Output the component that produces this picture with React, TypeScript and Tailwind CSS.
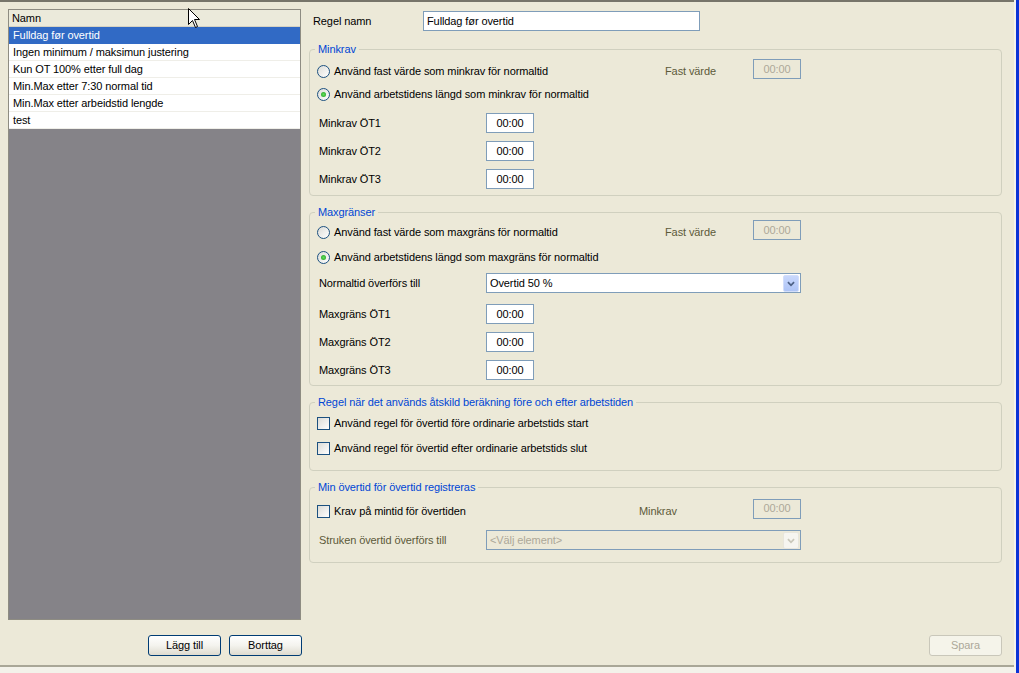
const rules = [
  'Fulldag før overtid',
  'Ingen minimum / maksimun justering',
  'Kun OT 100% etter full dag',
  'Min.Max etter 7:30 normal tid',
  'Min.Max etter arbeidstid lengde',
  'test',
];

function Radio({ checked }: { checked?: boolean }) {
  return (
    <span className="w-[13px] h-[13px] mr-[4px] shrink-0 rounded-full border border-[#1c5180] bg-linear-to-br from-[#dcdcd7] to-white flex items-center justify-center">
      {checked && <span className="w-[5px] h-[5px] rounded-full bg-radial from-[#5fe05a] to-[#1f9a1f]" />}
    </span>
  );
}

function Checkbox() {
  return <span className="w-[13px] h-[13px] mr-[4px] shrink-0 border border-[#1c5180] bg-linear-to-br from-[#dcdcd7] to-white" />;
}

function TimeInput({ disabled }: { disabled?: boolean }) {
  return (
    <div
      className={`w-[48px] h-[20px] shrink-0 border border-[#7f9db9] flex items-center justify-center ${
        disabled ? 'text-[#aca899] mb-[5px] h-[19px]' : 'bg-white text-black'
      }`}
    >
      00:00
    </div>
  );
}

function Chevron({ color }: { color: string }) {
  return (
    <svg width="16" height="17" viewBox="0 0 16 17">
      <path d="M4.5 7 L8 10.5 L11.5 7" fill="none" stroke={color} strokeWidth="2" />
    </svg>
  );
}

function Select({ value, disabled }: { value: string; disabled?: boolean }) {
  return (
    <div
      className={`w-[315px] h-[20px] border border-[#7f9db9] flex items-center p-[1px] ${
        disabled ? 'text-[#aca899]' : 'bg-white'
      }`}
    >
      <span className="flex-1 pl-[2px]">{value}</span>
      {disabled ? (
        <span className="w-[16px] h-[17px] rounded-[2px] border border-[#e8e6dc] bg-[#f6f5f0] flex items-center justify-center">
          <Chevron color="#c9c7ba" />
        </span>
      ) : (
        <span className="w-[16px] h-[17px] rounded-[2px] border border-[#d2defb] bg-linear-to-b from-[#c9d8fc] to-[#aec4f6] flex items-center justify-center">
          <Chevron color="#4d6185" />
        </span>
      )}
    </div>
  );
}

function Group({ title, className, children }: { title: string; className?: string; children: React.ReactNode }) {
  return (
    <fieldset className={`border border-[#d0d0bf] rounded-[4px] ${className ?? ''}`}>
      <legend className="ml-[5px] px-[3px] h-[13px] leading-[13px] text-[#0046d5]">{title}</legend>
      {children}
    </fieldset>
  );
}

function XPButton({ label, disabled }: { label: string; disabled?: boolean }) {
  return (
    <div
      className={`w-[73px] h-[21px] rounded-[3px] border flex items-center justify-center ${
        disabled
          ? 'border-[#c9c7ba] bg-[#f5f4ea] text-[#aca899]'
          : 'border-[#003c74] bg-linear-to-b from-white via-[#f4f3ee] to-[#dedbcf] text-black'
      }`}
    >
      {label}
    </div>
  );
}

function TimeRow({ label }: { label: string }) {
  return (
    <div className="h-[28px] flex items-center">
      <span className="w-[169px] pl-[2px]">{label}</span>
      <TimeInput />
    </div>
  );
}

export default function App() {
  return (
    <div className="w-[1019px] h-[673px] bg-[#ece9d8] flex overflow-hidden relative text-[11px] tracking-[-0.1px] text-black font-['Liberation_Sans',Arial,sans-serif]">
      <div className="w-[1014px] flex flex-col">
        <div className="h-[665px] border-t-2 border-[#77756a] flex">
          {/* left list */}
          <div className="w-[309px] pl-[8px] pr-[7px] pt-[7px] flex flex-col">
            <div className="w-[293px] h-[611px] border border-[#8e8c82] bg-[#858388] flex flex-col">
              <div className="h-[17px] bg-[#ebeadb] border-b border-[#d6d2c2] pl-[3px] flex items-center">Namn</div>
              {rules.map((r, i) => (
                <div
                  key={r}
                  className={`h-[17px] pl-[4px] flex items-center border-b ${
                    i === 0 ? 'bg-[#316ac5] text-white border-[#316ac5]' : 'bg-white border-[#efeee8]'
                  }`}
                >
                  {r}
                </div>
              ))}
            </div>
            <div className="mt-[15px] flex justify-end gap-[8px]">
              <XPButton label="Lägg till" />
              <XPButton label="Borttag" />
            </div>
          </div>

          {/* right form */}
          <div className="flex-1 pr-[12px] pt-[9px] pb-[9px] flex flex-col">
            <div className="h-[20px] flex items-center pl-[4px]">
              <span className="w-[110px]">Regel namn</span>
              <div className="w-[277px] h-[20px] border border-[#7f9db9] bg-white flex items-center pl-[3px]">
                Fulldag før overtid
              </div>
            </div>

            <Group title="Minkrav" className="mt-[12px]">
              <div className="px-[7px] pb-[2px]">
                <div className="mt-[4px] h-[23px] flex items-center">
                  <div className="w-[348px] flex items-center">
                    <Radio />
                    <span>Använd fast värde som minkrav för normaltid</span>
                  </div>
                  <span className="w-[88px] text-[#5c5a3a]">Fast värde</span>
                  <TimeInput disabled />
                </div>
                <div className="h-[23px] flex items-center">
                  <Radio checked />
                  <span>Använd arbetstidens längd som minkrav för normaltid</span>
                </div>
                <div className="mt-[3px]">
                  <TimeRow label="Minkrav ÖT1" />
                  <TimeRow label="Minkrav ÖT2" />
                  <TimeRow label="Minkrav ÖT3" />
                </div>
              </div>
            </Group>

            <Group title="Maxgränser" className="mt-[10px]">
              <div className="px-[7px] pb-[1px]">
                <div className="mt-[2px] h-[23px] flex items-center">
                  <div className="w-[348px] flex items-center">
                    <Radio />
                    <span>Använd fast värde som maxgräns för normaltid</span>
                  </div>
                  <span className="w-[88px] text-[#5c5a3a]">Fast värde</span>
                  <TimeInput disabled />
                </div>
                <div className="mt-[2px] h-[23px] flex items-center">
                  <Radio checked />
                  <span>Använd arbetstidens längd som maxgräns för normaltid</span>
                </div>
                <div className="mt-[2px] h-[24px] flex items-center">
                  <span className="w-[169px] pl-[2px]">Normaltid överförs till</span>
                  <Select value="Overtid 50 %" />
                </div>
                <div className="mt-[5px]">
                  <TimeRow label="Maxgräns ÖT1" />
                  <TimeRow label="Maxgräns ÖT2" />
                  <TimeRow label="Maxgräns ÖT3" />
                </div>
              </div>
            </Group>

            <Group title="Regel när det används åtskild beräkning före och efter arbetstiden" className="mt-[10px]">
              <div className="px-[7px] pb-[11px]">
                <div className="mt-[3px] h-[22px] flex items-center">
                  <Checkbox />
                  <span>Använd regel för övertid före ordinarie arbetstids start</span>
                </div>
                <div className="mt-[3px] h-[22px] flex items-center">
                  <Checkbox />
                  <span>Använd regel för övertid efter ordinarie arbetstids slut</span>
                </div>
              </div>
            </Group>

            <Group title="Min övertid för övertid registreras" className="mt-[10px]">
              <div className="px-[7px] pb-[10px]">
                <div className="mt-[6px] h-[22px] flex items-center">
                  <div className="w-[322px] flex items-center">
                    <Checkbox />
                    <span>Krav på mintid för övertiden</span>
                  </div>
                  <span className="w-[114px] text-[#5c5a3a]">Minkrav</span>
                  <TimeInput disabled />
                </div>
                <div className="mt-[6px] h-[24px] flex items-center">
                  <span className="w-[169px] pl-[2px] text-[#5c5a3a]">Struken övertid överförs till</span>
                  <Select value="<Välj element>" disabled />
                </div>
              </div>
            </Group>

            <div className="mt-auto flex justify-end">
              <XPButton label="Spara" disabled />
            </div>
          </div>
        </div>
        <div className="h-[2px] bg-[#a9a797]" />
        <div className="flex-1 bg-[#f3f2ea]" />
      </div>
      <div className="w-[2px] bg-[#f4f3ee]" />
      <div className="w-[3px] bg-[#0b33d6]" />

      {/* mouse pointer */}
      <svg className="absolute left-[188px] top-[8px]" width="13" height="21" viewBox="0 0 13 21">
        <path d="M0.5 0.5 L0.5 16.5 L4.5 12.5 L7.5 19.5 L9.5 18.5 L6.5 11.5 L11.5 11.5 Z" fill="white" stroke="black" strokeWidth="1" />
      </svg>
    </div>
  );
}
